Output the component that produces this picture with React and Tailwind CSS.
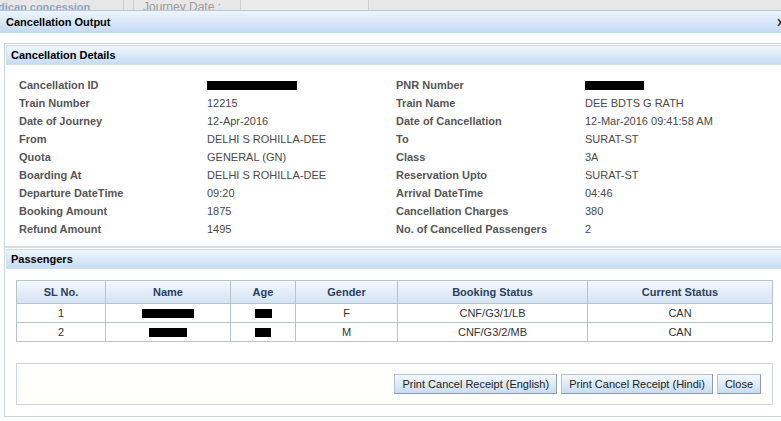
import React from "react";

const details = [
  ["Cancellation ID", null, "PNR Number", null],
  ["Train Number", "12215", "Train Name", "DEE BDTS G RATH"],
  ["Date of Journey", "12-Apr-2016", "Date of Cancellation", "12-Mar-2016 09:41:58 AM"],
  ["From", "DELHI S ROHILLA-DEE", "To", "SURAT-ST"],
  ["Quota", "GENERAL (GN)", "Class", "3A"],
  ["Boarding At", "DELHI S ROHILLA-DEE", "Reservation Upto", "SURAT-ST"],
  ["Departure DateTime", "09:20", "Arrival DateTime", "04:46"],
  ["Booking Amount", "1875", "Cancellation Charges", "380"],
  ["Refund Amount", "1495", "No. of Cancelled Passengers", "2"],
];

const passengers = [
  { sl: "1", nameW: "w-[52px]", ageW: "w-[17px]", gender: "F", booking: "CNF/G3/1/LB", current: "CAN" },
  { sl: "2", nameW: "w-[38px]", ageW: "w-[16px]", gender: "M", booking: "CNF/G3/2/MB", current: "CAN" },
];

const Redacted = ({ w }) => <span className={`inline-block h-[9px] bg-black align-middle ${w}`} />;

const SectionHead = ({ children }) => (
  <div className="h-[20px] flex items-center pl-[4px] border border-[#d3dde6] bg-gradient-to-b from-[#f0f7fe] to-[#c6dcf5] text-[11px] font-bold text-black">
    {children}
  </div>
);

const Btn = ({ children }) => (
  <button className="h-[20px] px-[7px] border border-[#b7c3d0] border-b-[#8e9aa8] border-r-[#8e9aa8] bg-gradient-to-b from-[#f4f8fd] to-[#c9dcf2] text-[11px] text-[#222]">
    {children}
  </button>
);

export default function App() {
  return (
    <div className="w-[781px] h-[421px] overflow-hidden bg-white" style={{ fontFamily: '"Liberation Sans", Arial, sans-serif' }}>
      {/* underlying page strip */}
      <div className="h-[10px] bg-[#e7e7e7] flex items-end overflow-hidden text-[11px] leading-[14px]">
        <span className="font-bold text-[#8ea3c4] w-[125px] -mb-[4px] -ml-[2px]">dicap concession</span>
        <span className="h-full w-[10px] border-l border-[#cfcfcf]" />
        <span className="h-full w-[10px] border-l border-[#cfcfcf]" />
        <span className="text-[#999] w-[97px] -mb-[4px] text-[12px]">Journey Date :</span>
        <span className="h-full w-[128px] border-l border-[#cfcfcf] bg-[#ebebeb]" />
        <span className="h-full flex-1 border-l border-[#cfcfcf]" />
      </div>

      {/* dialog title */}
      <div className="h-[23px] border-t border-[#b6c7dc] bg-gradient-to-b from-[#eef5fd] to-[#c2d9f4] flex items-center justify-between pl-[6px] text-[11px] font-bold text-black">
        <span>Cancellation Output</span>
        <span className="-mr-[3px] text-[12px] text-[#333]">x</span>
      </div>

      {/* dialog body */}
      <div className="pt-[10px] pl-[4px]">
        <div className="w-[790px] h-[374px] border border-[#c9d5df] bg-white">
          <div className="pt-[1px] pl-[1px]">
            <SectionHead>Cancellation Details</SectionHead>
          </div>
          <div className="pt-[11px] pl-[14px] pb-[8px]">
            {details.map(([l1, v1, l2, v2]) => (
              <div key={l1} className="grid grid-cols-[188px_189px_189px_1fr] h-[18px] items-center text-[11px]">
                <span className="font-bold text-[#565656]">{l1}</span>
                <span className="text-[#4a4a4a]">{v1 ?? <Redacted w="w-[90px]" />}</span>
                <span className="font-bold text-[#565656]">{l2}</span>
                <span className="text-[#4a4a4a]">{v2 ?? <Redacted w="w-[59px]" />}</span>
              </div>
            ))}
          </div>

          <div className="border-t-2 border-[#d5dee6] pt-[1px] pl-[1px]">
            <SectionHead>Passengers</SectionHead>
          </div>

          <div className="pl-[11px] pt-[11px]">
            <table className="w-[757px] border-collapse text-[11px] text-[#333]">
              <thead>
                <tr className="h-[23px] bg-gradient-to-b from-[#f3f8fd] to-[#d3e3f5]">
                  {[
                    ["SL No.", "w-[89px]"],
                    ["Name", "w-[125px]"],
                    ["Age", "w-[65px]"],
                    ["Gender", "w-[102px]"],
                    ["Booking Status", "w-[190px]"],
                    ["Current Status", ""],
                  ].map(([h, w]) => (
                    <th key={h} className={`border border-[#b9c3cc] font-bold text-[#2c3f63] ${w}`}>{h}</th>
                  ))}
                </tr>
              </thead>
              <tbody>
                {passengers.map((p) => (
                  <tr key={p.sl} className="h-[19px] text-center">
                    <td className="border border-[#b9c3cc]">{p.sl}</td>
                    <td className="border border-[#b9c3cc]"><Redacted w={p.nameW} /></td>
                    <td className="border border-[#b9c3cc]"><Redacted w={p.ageW} /></td>
                    <td className="border border-[#b9c3cc]">{p.gender}</td>
                    <td className="border border-[#b9c3cc]">{p.booking}</td>
                    <td className="border border-[#b9c3cc]">{p.current}</td>
                  </tr>
                ))}
              </tbody>
            </table>

            <div className="mt-[21px] w-[757px] h-[42px] border border-[#cfd6dc] bg-gradient-to-b from-white to-[#fefefa] flex items-center justify-end gap-[4px] pr-[11px]">
              <Btn>Print Cancel Receipt (English)</Btn>
              <Btn>Print Cancel Receipt (Hindi)</Btn>
              <Btn>Close</Btn>
            </div>
          </div>
        </div>
      </div>
    </div>
  );
}
